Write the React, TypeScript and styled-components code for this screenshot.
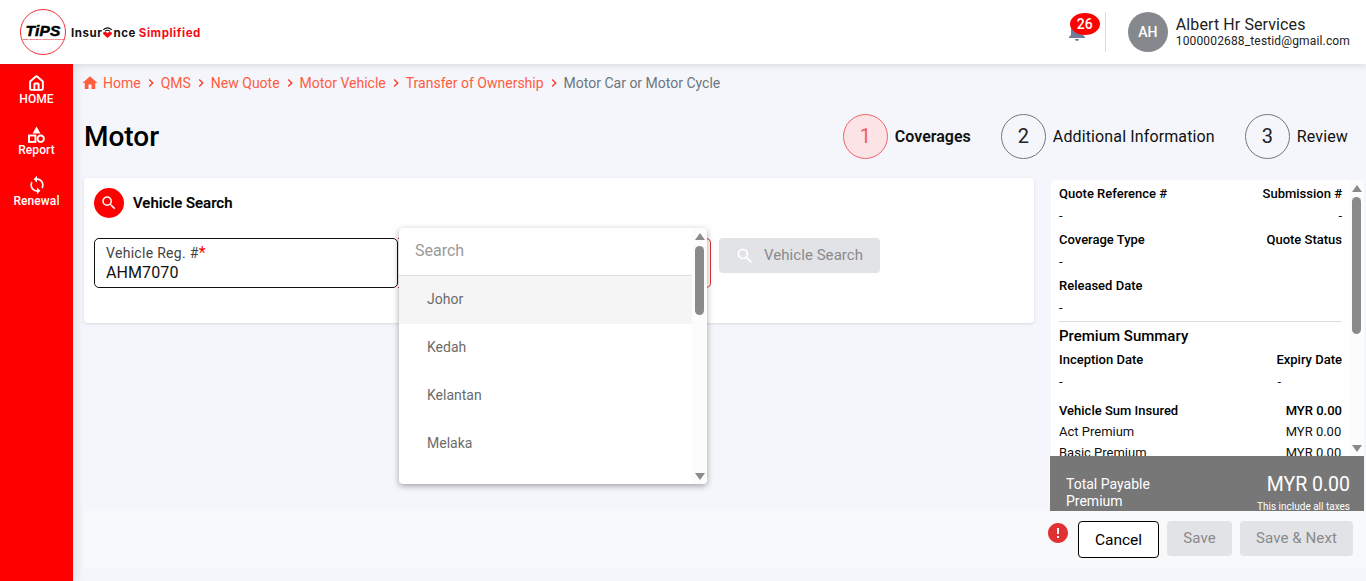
import React from "react";
import styled, { createGlobalStyle } from "styled-components";
import { MdHome, MdChevronRight, MdNotifications, MdSearch, MdError, MdSync } from "react-icons/md";
import { LuHouse } from "react-icons/lu";

const Global = createGlobalStyle`
  html, body { margin: 0; padding: 0; height: 100%; overflow: hidden; background: #f4f6fb; }
  * { box-sizing: border-box; }
  body { font-family: Roboto, "Liberation Sans", sans-serif; color: #000; }
`;

const Page = styled.div`
  width: 1366px; height: 581px; display: flex; flex-direction: column; overflow: hidden;
`;
const Header = styled.header`
  height: 64px; flex: none; background: #fff; display: flex; align-items: center;
  padding: 0 16px 0 20px; box-shadow: 0 2px 6px rgba(60, 70, 100, 0.14); position: relative; z-index: 3;
`;
const LogoCircle = styled.div`
  width: 46px; height: 46px; border: 1.5px solid #f0303a; border-radius: 50%;
  display: flex; flex-direction: column; align-items: center; justify-content: center; flex: none;
`;
const LogoMark = styled.span`
  font: italic 700 15.5px/13px "Liberation Sans", sans-serif; color: #000; letter-spacing: 0.2px;
  -webkit-text-stroke: 0.5px #000;
`;
const LogoTiny = styled.span`
  font: 700 2.5px/3px "Liberation Sans", sans-serif; color: #e01020; white-space: nowrap; margin-top: 1px;
`;
const Tagline = styled.div`
  display: flex; align-items: flex-end; margin-left: 5px;
  font: 700 11.5px/14px Inter, sans-serif; letter-spacing: 0.55px; color: #111; white-space: nowrap;
`;
const TagRed = styled.span`color: #f50a14; margin-left: 3px;`;
const WifiHeart = styled.svg`width: 11px; height: 14px; margin: 0 0 1px 0; flex: none;`;
const HeaderRight = styled.div`
  margin-left: auto; display: flex; align-items: center; height: 40px;
`;
const BellWrap = styled.div`
  position: relative; width: 24px; height: 24px; margin-right: 16px; color: #6c7c99; top: -1px;
  svg { display: block; }
`;
const Badge = styled.span`
  position: absolute; left: 5px; top: -6px; width: 30px; height: 22px; background: #ff0000; color: #fff;
  border-radius: 50%; font-size: 14px; font-weight: 500; line-height: 22px; text-align: center;
`;
const VDivider = styled.div`width: 1px; height: 40px; background: #dcdcdc; margin-right: 22px;`;
const Avatar = styled.div`
  width: 40px; height: 40px; border-radius: 50%; background: #85888c; color: #fff;
  font-size: 14px; font-weight: 500; display: flex; align-items: center; justify-content: center; margin-right: 8px;
`;
const UserName = styled.div`font-size: 16px; line-height: 18px; color: #222; padding-top: 1px; letter-spacing: 0.1px;`;
const UserMail = styled.div`font-size: 12px; line-height: 15px; color: #222; letter-spacing: 0.15px;`;

const Body = styled.div`flex: 1; display: flex; min-height: 0;`;
const Sidebar = styled.nav`
  width: 73px; flex: none; background: #ff0000; padding-top: 10px; display: flex; flex-direction: column; gap: 11px;
  box-shadow: 4px 0 8px rgba(60, 70, 100, 0.1); position: relative; z-index: 2;
`;
const NavItem = styled.div`
  height: 40px; display: flex; flex-direction: column; align-items: center; color: #fff;
  font-size: 12px; line-height: 14px; font-weight: 500; letter-spacing: 0.1px;
  svg { display: block; }
`;
const NavIcon = styled.div`height: 18px; display: flex; align-items: center; justify-content: center;`;

const Main = styled.main`flex: 1; min-width: 0; display: flex; flex-direction: column;`;
const Crumbs = styled.div`
  height: 20px; margin: 9px 0 0 8px; display: flex; align-items: center; font-size: 14px; color: #ff5c40; white-space: nowrap;
  svg { flex: none; }
`;
const CrumbHome = styled(MdHome)`color: #ff5c40; margin-right: 4px;`;
const CrumbSep = styled.span`display: flex; width: 20px; justify-content: center; color: #ff3a20;`;
const CrumbLast = styled.span`color: #6c757d;`;
const TitleRow = styled.div`
  height: 44px; margin: 21px 18px 0 11px; display: flex; align-items: center;
`;
const Title = styled.h1`margin: 0; font-size: 28px; font-weight: 500; color: #000; flex: 1;`;
const Step = styled.div`display: flex; align-items: center; margin-left: 30px; font-size: 16px; color: #111; letter-spacing: 0.13px;`;
const StepFirst = styled(Step)`margin-left: 0;`;
const StepCircle = styled.span<{ $active?: boolean }>`
  width: 45px; height: 45px; border-radius: 50%; display: flex; align-items: center; justify-content: center;
  font-size: 20px; margin-right: 7px;
  color: ${(p) => (p.$active ? "#ef5a62" : "#222")};
  background: ${(p) => (p.$active ? "#fce3e5" : "transparent")};
  border: 1px solid ${(p) => (p.$active ? "#f0656c" : "#777")};
`;
const StepStrong = styled.span`font-weight: 600; letter-spacing: 0;`;

const Content = styled.div`
  height: 333px; margin: 20px 2px 0 11px; display: flex; gap: 17px; align-items: flex-start;
`;
const Card = styled.section`
  width: 950px; flex: none; height: 145px; background: #fff; border-radius: 4px; padding: 10px;
  box-shadow: 0 1px 3px rgba(60, 70, 100, 0.16);
`;
const CardHead = styled.div`display: flex; align-items: center; gap: 9px; height: 30px;`;
const CardIcon = styled.span`
  width: 30px; height: 30px; background: #ff0000; border-radius: 50%; color: #fff;
  display: flex; align-items: center; justify-content: center;
`;
const CardTitle = styled.h2`margin: 0 0 1px; font-size: 15px; font-weight: 500; -webkit-text-stroke: 0.2px #000;`;
const FieldRow = styled.div`display: flex; margin-top: 20px; align-items: flex-start;`;
const TextField = styled.div`
  width: 304px; height: 50px; border: 1px solid #111; border-radius: 5px; padding: 6px 11px; flex: none;
`;
const FieldLabel = styled.div`font-size: 14px; line-height: 16px; color: #444; letter-spacing: 0.3px;`;
const Star = styled.span`color: #ff0000; font-size: 16px; line-height: 14px;`;
const FieldValue = styled.div`font-size: 16px; line-height: 20px; color: #111; letter-spacing: 0.1px; margin-top: 2px;`;
const SelectWrap = styled.div`
  position: relative; width: 313px; height: 50px; flex: none; border: 1px solid #d32f2f; border-left: 0; border-radius: 0 5px 5px 0;
`;
const Dropdown = styled.div`
  position: absolute; left: 1px; top: -11px; width: 308px; height: 256px; background: #fff; border-radius: 4px;
  box-shadow: 0 2px 6px rgba(0, 0, 0, 0.35); overflow: hidden; z-index: 5;
`;
const SearchBox = styled.div`
  height: 48px; margin-right: 15px; border-bottom: 1px solid #dedede; padding: 0 16px 2px; display: flex; align-items: center;
  font-size: 16px; color: #9a9a9a;
`;
const Option = styled.div<{ $active?: boolean }>`
  height: 48px; margin-right: 15px; padding: 0 0 2px 28px; display: flex; align-items: center; font-size: 14px; color: #6b6b6b;
  background: ${(p) => (p.$active ? "#f5f5f5" : "transparent")};
`;
const Track = styled.div`
  position: absolute; top: 0; right: 0; bottom: 0; width: 15px; background: #fcfcfc;
`;
const ArrowUp = styled.span`
  position: absolute; top: 5px; left: 50%; margin-left: -5px; width: 0; height: 0;
  border-left: 5px solid transparent; border-right: 5px solid transparent; border-bottom: 7px solid #8a8a8a;
`;
const ArrowDown = styled.span`
  position: absolute; bottom: 4px; left: 50%; margin-left: -5px; width: 0; height: 0;
  border-left: 5px solid transparent; border-right: 5px solid transparent; border-top: 7px solid #8a8a8a;
`;
const Thumb = styled.span<{ $top: number; $h: number }>`
  position: absolute; left: 3px; width: 9px; top: ${(p) => p.$top}px; height: ${(p) => p.$h}px;
  background: #8a8a8a; border-radius: 5px;
`;
const SearchBtn = styled.button`
  width: 161px; height: 35px; margin-left: 8px; border: 0; border-radius: 4px; background: #e2e3e7; color: #8a8a8a;
  font: 400 15px Roboto, sans-serif; letter-spacing: 0.05px; display: flex; align-items: center; padding: 0 0 2px 16px; gap: 9px;
  svg { color: #fff; margin-top: 2px; }
`;

const Side = styled.aside`width: 313px; flex: none; height: 333px; display: flex; flex-direction: column; margin-top: 2px;`;
const Summary = styled.div`
  position: relative; height: 276px; flex: none; background: #fff; overflow: hidden; padding: 2px 22px 0 8px; border-radius: 4px 4px 0 0;
`;
const InfoGrid = styled.div`
  display: grid; grid-template-columns: 1fr 1fr; font-size: 13px; line-height: 23px; color: #111;
`;
const Head = styled.div<{ $right?: boolean }>`
  font-weight: 500; text-align: ${(p) => (p.$right ? "right" : "left")}; color: #000;
`;
const Val = styled.div<{ $right?: boolean; $pad?: number }>`
  text-align: ${(p) => (p.$right ? "right" : "left")};
  padding-left: ${(p) => p.$pad ?? 0}px;
  line-height: 21px; margin-bottom: 2px; min-height: 21px;
`;
const Rule = styled.hr`border: 0; border-top: 1px solid #dedede; margin: 1px 0 0;`;
const SumTitle = styled.h3`margin: 4px 0 2px; font-size: 15px; line-height: 20px; font-weight: 500; color: #000;`;
const Amounts = styled.div`margin-top: 6px; display: grid; grid-template-columns: 1fr auto; font-size: 13px; line-height: 21px; color: #111; text-align: left;`;
const Strong = styled.div`font-weight: 500; color: #000;`;
const Total = styled.div`
  height: 55px; flex: none; background: #777; color: #fff; display: flex; justify-content: space-between; overflow: hidden;
  padding: 20px 14px 0 16px; margin-left: -1px; width: 314px;
`;
const TotalLabel = styled.div`font-size: 14px; line-height: 17px; width: 110px;`;
const TotalRight = styled.div`text-align: right;`;
const TotalAmt = styled.div`font-size: 19.5px; line-height: 17px;`;
const TotalNote = styled.div`font-size: 10px; line-height: 12px; margin-top: 8px;`;

const Footer = styled.div`
  height: 57px; margin-left: 11px; background: #f8f9fb; display: flex; align-items: flex-start; justify-content: flex-end;
  padding: 10px 13px 0 0; flex: none;
`;
const ErrIcon = styled.span`color: #e03232; margin: 0 8px 0 0; height: 24px; svg { display: block; }`;
const CancelBtn = styled.button`
  width: 81px; height: 37px; background: #fff; border: 1px solid #000; border-radius: 4px; font: 400 15.5px Roboto, sans-serif; color: #000;
`;
const GreyBtn = styled.button<{ $w: number }>`
  width: ${(p) => p.$w}px; height: 35px; margin-left: 8px; background: #e2e3e6; border: 0; border-radius: 4px; padding: 0 0 2px;
  font: 400 15px Roboto, sans-serif; color: #8a8a8a; letter-spacing: 0.1px;
`;

const crumbs = ["Home", "QMS", "New Quote", "Motor Vehicle", "Transfer of Ownership"];

export default function App() {
  return (
    <Page>
      <Global />
      <Header>
        <LogoCircle>
          <LogoMark>TiPS</LogoMark>
          <LogoTiny>Total Integrated Protection System</LogoTiny>
        </LogoCircle>
        <Tagline>
          Insur
          <WifiHeart viewBox="0 0 13 14" fill="none">
            <path d="M1.5 4.5C4.5 1.6 8.5 1.6 11.5 4.5" stroke="#111" strokeWidth="1.3" />
            <path d="M3.5 6.3C5.2 4.7 7.8 4.7 9.5 6.3" stroke="#111" strokeWidth="1.2" />
            <path d="M6.5 14L1.6 9.6C0.6 8.4 1.6 6.9 3 7.1C4.6 7.2 5.8 7.6 6.5 8.4C7.2 7.6 8.4 7.2 10 7.1C11.4 6.9 12.4 8.4 11.4 9.6Z" fill="#f50a14" />
          </WifiHeart>
          nce<TagRed>Simplified</TagRed>
        </Tagline>
        <HeaderRight>
          <BellWrap>
            <MdNotifications size={24} />
            <Badge>26</Badge>
          </BellWrap>
          <VDivider />
          <Avatar>AH</Avatar>
          <div>
            <UserName>Albert Hr Services</UserName>
            <UserMail>1000002688_testid@gmail.com</UserMail>
          </div>
        </HeaderRight>
      </Header>
      <Body>
        <Sidebar>
          <NavItem>
            <NavIcon><LuHouse size={17} strokeWidth={2.8} /></NavIcon>
            HOME
          </NavItem>
          <NavItem>
            <NavIcon>
              <svg width="17" height="17" viewBox="0 0 17 17" fill="none">
                <path d="M8.5 0.5L12.5 7.5H4.5Z" fill="#fff" />
                <rect x="1" y="9.5" width="6.4" height="6.4" stroke="#fff" strokeWidth="1.9" />
                <circle cx="12.7" cy="12.7" r="3.2" stroke="#fff" strokeWidth="1.9" />
              </svg>
            </NavIcon>
            Report
          </NavItem>
          <NavItem>
            <NavIcon><MdSync size={20} /></NavIcon>
            Renewal
          </NavItem>
        </Sidebar>
        <Main>
          <Crumbs>
            <CrumbHome size={18} />
            {crumbs.map((c) => (
              <React.Fragment key={c}>
                {c}
                <CrumbSep><MdChevronRight size={16} /></CrumbSep>
              </React.Fragment>
            ))}
            <CrumbLast>Motor Car or Motor Cycle</CrumbLast>
          </Crumbs>
          <TitleRow>
            <Title>Motor</Title>
            <StepFirst><StepCircle $active>1</StepCircle><StepStrong>Coverages</StepStrong></StepFirst>
            <Step><StepCircle>2</StepCircle>Additional Information</Step>
            <Step><StepCircle>3</StepCircle>Review</Step>
          </TitleRow>
          <Content>
            <Card>
              <CardHead>
                <CardIcon><MdSearch size={18} /></CardIcon>
                <CardTitle>Vehicle Search</CardTitle>
              </CardHead>
              <FieldRow>
                <TextField>
                  <FieldLabel>Vehicle Reg. #<Star>*</Star></FieldLabel>
                  <FieldValue>AHM7070</FieldValue>
                </TextField>
                <SelectWrap>
                  <Dropdown>
                    <SearchBox>Search</SearchBox>
                    <Option $active>Johor</Option>
                    <Option>Kedah</Option>
                    <Option>Kelantan</Option>
                    <Option>Melaka</Option>
                    <Track>
                      <ArrowUp />
                      <Thumb $top={18} $h={69} />
                      <ArrowDown />
                    </Track>
                  </Dropdown>
                </SelectWrap>
                <SearchBtn><MdSearch size={20} />Vehicle Search</SearchBtn>
              </FieldRow>
            </Card>
            <Side>
              <Summary>
                <InfoGrid>
                  <Head>Quote Reference #</Head><Head $right>Submission #</Head>
                  <Val>-</Val><Val $right>-</Val>
                  <Head>Coverage Type</Head><Head $right>Quote Status</Head>
                  <Val>-</Val><Val $right />
                  <Head>Released Date</Head><Val />
                  <Val>-</Val><Val />
                </InfoGrid>
                <Rule />
                <SumTitle>Premium Summary</SumTitle>
                <InfoGrid>
                  <Head>Inception Date</Head><Head $right>Expiry Date</Head>
                  <Val>-</Val><Val $pad={77}>-</Val>
                </InfoGrid>
                <Amounts>
                  <Strong>Vehicle Sum Insured</Strong><Strong>MYR 0.00</Strong>
                  <div>Act Premium</div><div>MYR 0.00</div>
                  <div>Basic Premium</div><div>MYR 0.00</div>
                </Amounts>
                <Track>
                  <ArrowUp />
                  <Thumb $top={17} $h={137} />
                  <ArrowDown />
                </Track>
              </Summary>
              <Total>
                <TotalLabel>Total Payable Premium</TotalLabel>
                <TotalRight>
                  <TotalAmt>MYR 0.00</TotalAmt>
                  <TotalNote>This include all taxes</TotalNote>
                </TotalRight>
              </Total>
            </Side>
          </Content>
          <Footer>
            <ErrIcon><MdError size={24} /></ErrIcon>
            <CancelBtn>Cancel</CancelBtn>
            <GreyBtn $w={65}>Save</GreyBtn>
            <GreyBtn $w={113}>Save &amp; Next</GreyBtn>
          </Footer>
        </Main>
      </Body>
    </Page>
  );
}
